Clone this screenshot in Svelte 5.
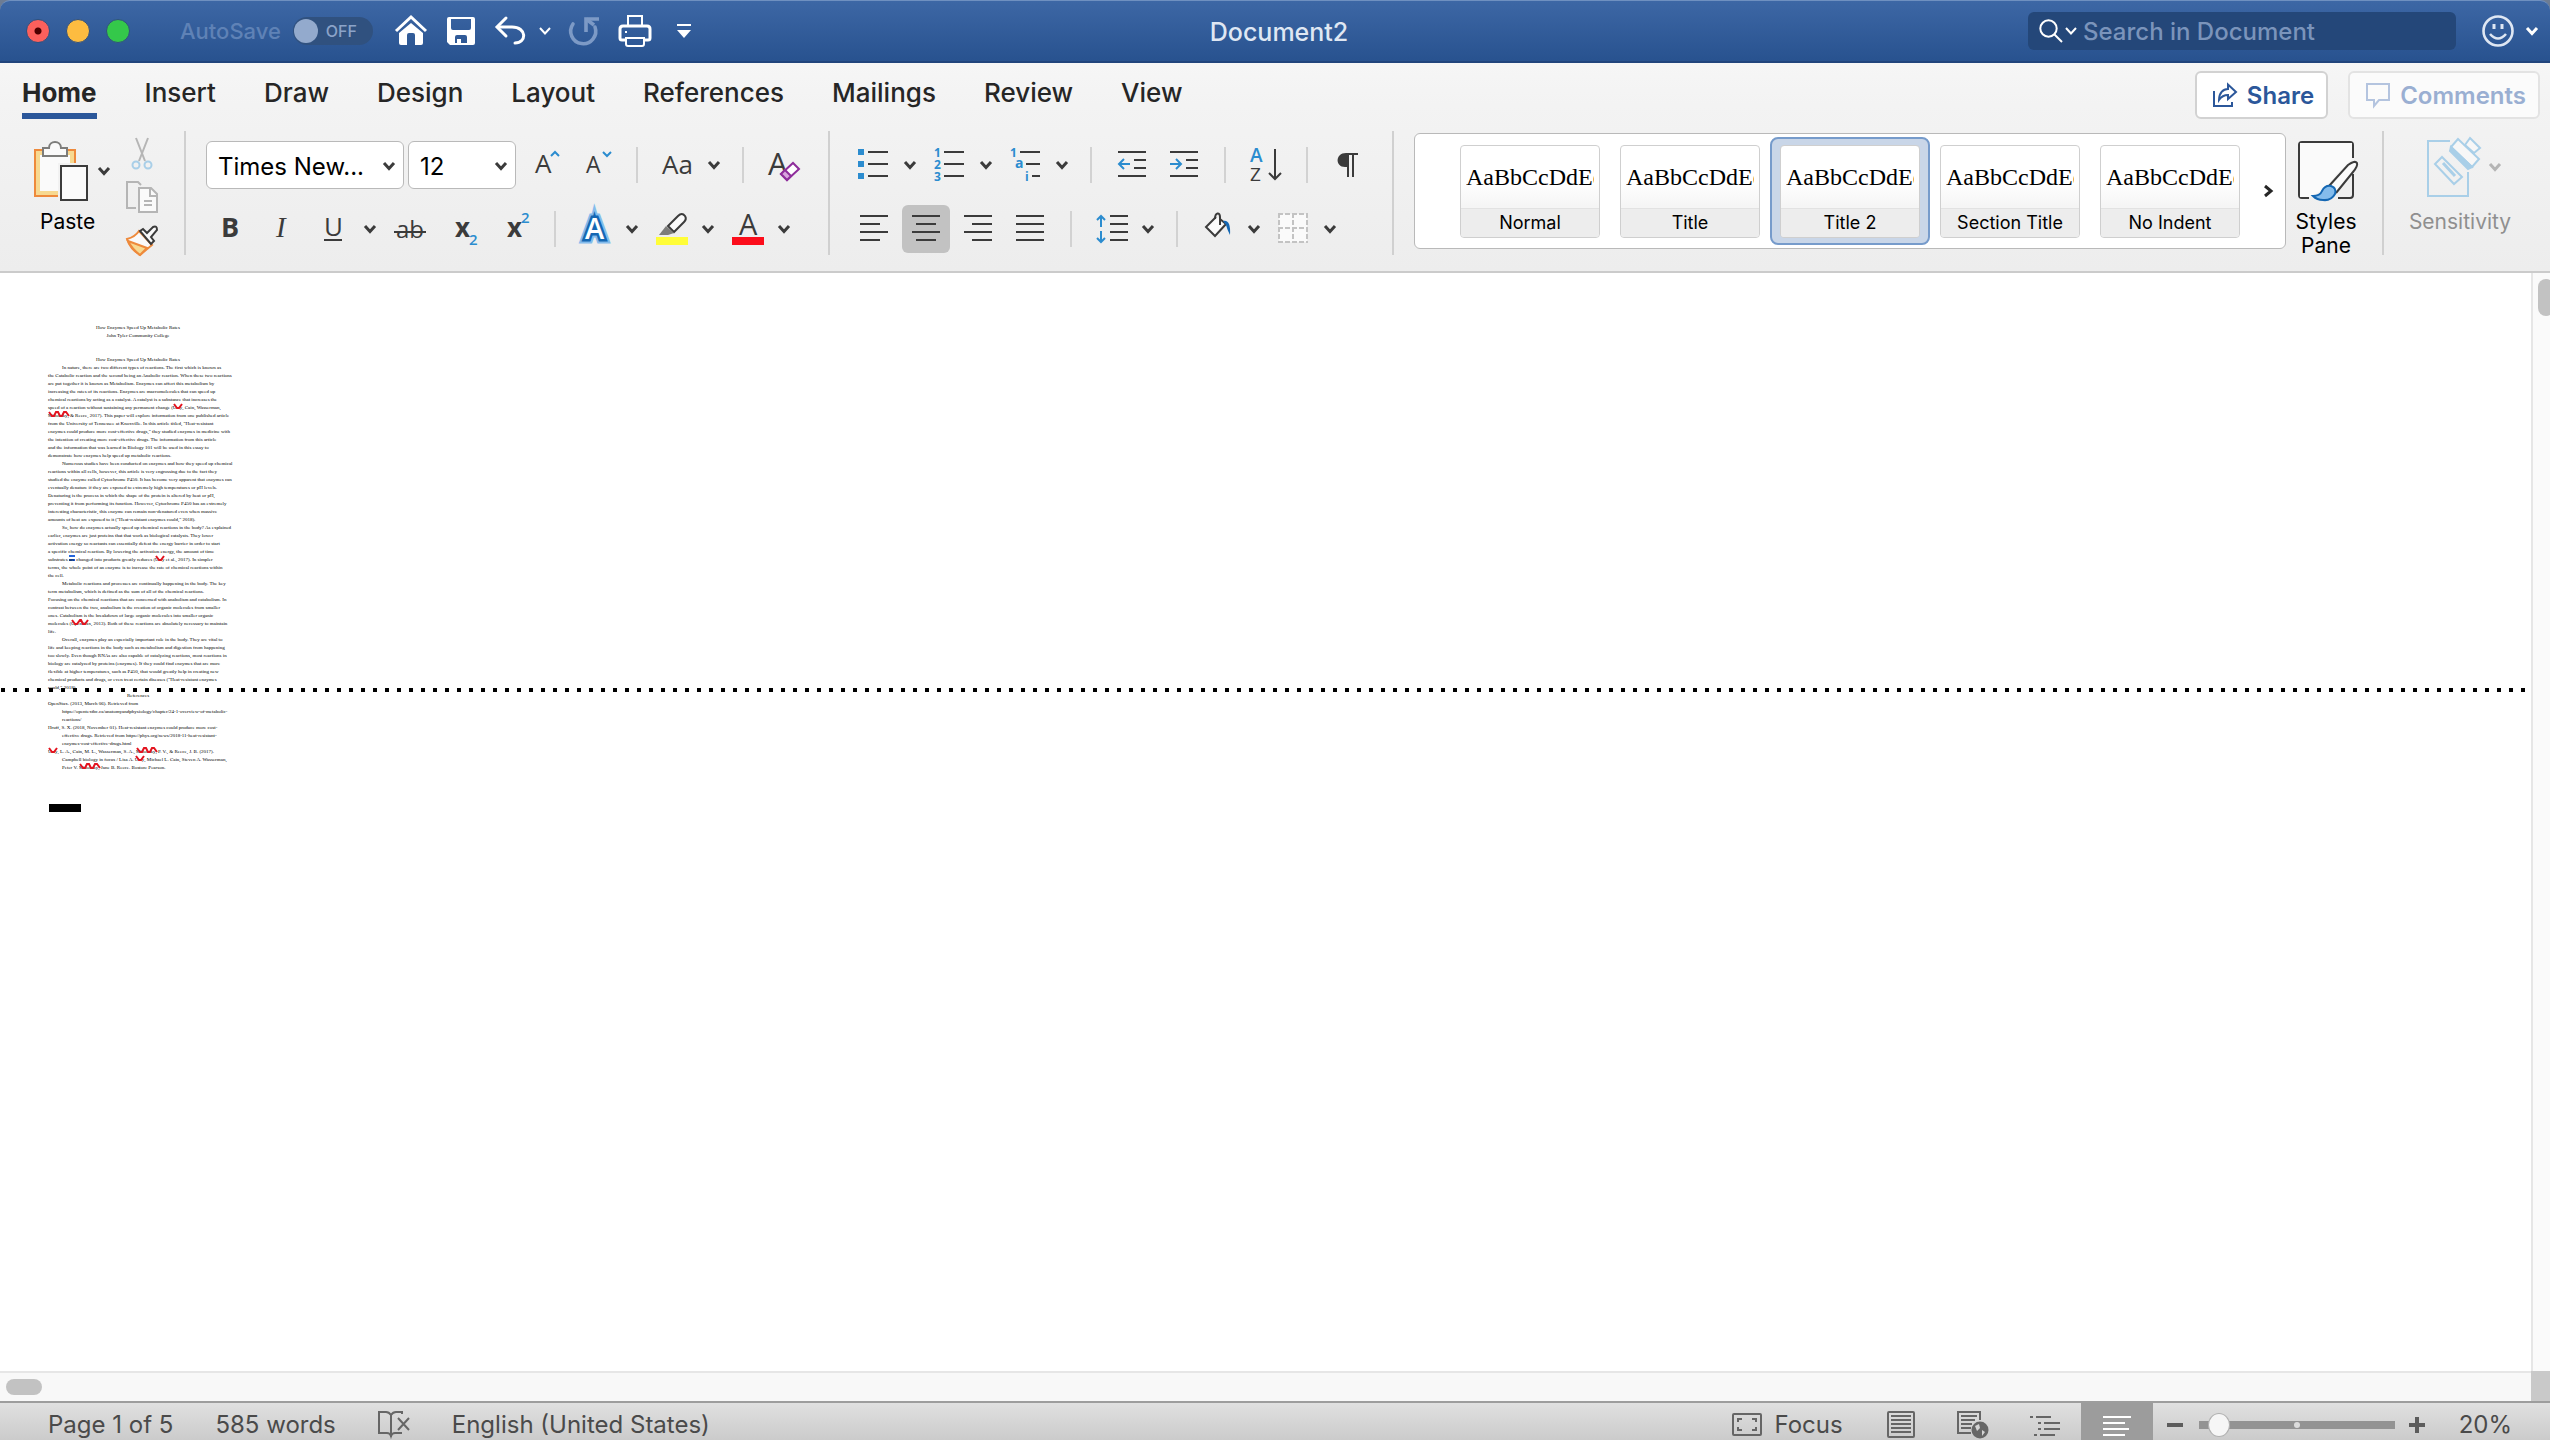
<script>
	let fontName = $state('Times New...');
	let fontSize = $state('12');
	let autoSave = $state(false);
	let zoom = $state(20);
	let activeTab = $state('Home');
	let activeStyle = $state('Title 2');

	const tabs = [
		'Home',
		'Insert',
		'Draw',
		'Design',
		'Layout',
		'References',
		'Mailings',
		'Review',
		'View'
	];

	const styles = ['Normal', 'Title', 'Title 2', 'Section Title', 'No Indent'];

	// c = centred, i = first line indent, blank = flush left
	// [word] is a spelling mark, {word} is a grammar mark
	const lines = [
		['c', 'How Enzymes Speed Up Metabolic Rates'],
		['c', 'John Tyler Community College'],
		['', ''],
		['', ''],
		['c', 'How Enzymes Speed Up Metabolic Rates'],
		['i', 'In nature, there are two different types of reactions. The first which is known as'],
		['', 'the Catabolic reaction and the second being an Anabolic reaction. When these two reactions'],
		['', 'are put together it is known as Metabolism. Enzymes can affect this metabolism by'],
		['', 'increasing the rates of its reactions. Enzymes are macromolecules that can speed up'],
		['', 'chemical reactions by acting as a catalyst. A catalyst is a substance that increases the'],
		['', 'speed of a reaction without sustaining any permanent change ([Urry], Cain, Wasserman,'],
		['', '[Minorsky], & Reece, 2017). This paper will explore information from one published article'],
		['', 'from the University of Tennessee at Knoxville. In this article titled, "Heat-resistant'],
		['', 'enzymes could produce more cost-effective drugs," they studied enzymes in medicine with'],
		['', 'the intention of creating more cost-effective drugs. The information from this article'],
		['', 'and the information that was learned in Biology 101 will be used in this essay to'],
		['', 'demonstrate how enzymes help speed up metabolic reactions.'],
		['i', 'Numerous studies have been conducted on enzymes and how they speed up chemical'],
		['', 'reactions within all cells, however, this article is very engrossing due to the fact they'],
		['', 'studied the enzyme called Cytochrome P450. It has become very apparent that enzymes can'],
		['', 'eventually denature if they are exposed to extremely high temperatures or pH levels.'],
		['', 'Denaturing is the process in which the shape of the protein is altered by heat or pH,'],
		['', 'preventing it from performing its function. However, Cytochrome P450 has an extremely'],
		['', 'interesting characteristic, this enzyme can remain non-denatured even when massive'],
		['', 'amounts of heat are exposed to it ("Heat-resistant enzymes could," 2018).'],
		['i', 'So, how do enzymes actually speed up chemical reactions in the body? As explained'],
		['', 'earlier, enzymes are just proteins that that work as biological catalysts. They lower'],
		['', 'activation energy so reactants can essentially defeat the energy barrier in order to start'],
		['', 'a specific chemical reaction. By lowering the activation energy, the amount of time'],
		['', 'substrates {are} changed into products greatly reduces ([Urry] et al., 2017). In simpler'],
		['', 'terms, the whole point of an enzyme is to increase the rate of chemical reactions within'],
		['', 'the cell.'],
		['i', 'Metabolic reactions and processes are continually happening in the body. The key'],
		['', 'term metabolism, which is defined as the sum of all of the chemical reactions.'],
		['', 'Focusing on the chemical reactions that are concerned with anabolism and catabolism. In'],
		['', 'contrast between the two, anabolism is the creation of organic molecules from smaller'],
		['', 'ones. Catabolism is the breakdown of large organic molecules into smaller organic'],
		['', 'molecules ([OpenStax], 2013). Both of these reactions are absolutely necessary to maintain'],
		['', 'life.'],
		['i', 'Overall, enzymes play an especially important role in the body. They are vital to'],
		['', 'life and keeping reactions in the body such as metabolism and digestion from happening'],
		['', 'too slowly. Even though RNAs are also capable of catalyzing reactions, most reactions in'],
		['', 'biology are catalyzed by proteins (enzymes). If they could find enzymes that are more'],
		['', 'flexible at higher temperatures, such as P450, that would greatly help in creating new'],
		['', 'chemical products and drugs, or even treat certain diseases ("Heat-resistant enzymes'],
		['break', 'could," 2018).'],
		['c', 'References'],
		['', 'OpenStax. (2013, March 06). Retrieved from'],
		['i', 'https://opentextbc.ca/anatomyandphysiology/chapter/24-1-overview-of-metabolic-'],
		['i', 'reactions/'],
		['', 'Hruff, S. X. (2018, November 01). Heat-resistant enzymes could produce more cost-'],
		['i', 'effective drugs. Retrieved from https://phys.org/news/2018-11-heat-resistant-'],
		['i', 'enzymes-cost-effective-drugs.html'],
		['', '[Urry], L. A., Cain, M. L., Wasserman, S. A., [Minorsky], P. V., & Reece, J. B. (2017).'],
		['i', 'Campbell biology in focus / Lisa A. [Urry], Michael L. Cain, Steven A. Wasserman,'],
		['i', 'Peter V. [Minorsky], Jane B. Reece. Boston: Pearson.']
	];

	const waves = {
		Urry: 'M1 1L4 5H6L9 1',
		OpenStax: 'M1 1L4 5H6L9 1H10L12 5H14L17 1',
		Minorsky: 'M1 1L4 5H6L8 1H10L12 5H14L16 1H18L21 5'
	};

	/**
	 * Split a line into plain text and marked words.
	 * @param {string} text
	 */
	function parts(text) {
		return text.split(/(\[\w+\]|\{\w+\})/).filter((part) => part !== '');
	}
</script>

{#snippet chevron()}
	<svg class="chevron" viewBox="0 0 12 10" aria-hidden="true">
		<path d="M1 2L6 7.5L11 2" />
	</svg>
{/snippet}

<div class="window">
	<header class="titlebar">
		<div class="title_left">
			<div class="lights">
				<button class="light close" aria-label="Close"></button>
				<button class="light minimise" aria-label="Minimise"></button>
				<button class="light zoom" aria-label="Zoom"></button>
			</div>
			<label class="autosave">
				AutoSave
				<span class="switch">
					<input type="checkbox" role="switch" bind:checked={autoSave} />
					<span>OFF</span>
				</span>
			</label>
			<div class="quick">
				<button aria-label="Home">
					<svg viewBox="0 0 32 32">
						<path d="M1 16L16 2L31 16" fill="none" stroke="#fff" stroke-width="3" />
						<path d="M16 8L28 18V28Q28 30 26 30H20V20Q20 18 18 18H14Q12 18 12 20V30H6Q4 30 4 28V18Z" fill="#fff" />
					</svg>
				</button>
				<button aria-label="Save">
					<svg viewBox="0 0 32 32">
						<path
							fill="#fff"
							fill-rule="evenodd"
							d="M4 2H28Q30 2 30 4V28Q30 30 28 30H5L2 27V4Q2 2 4 2ZM6 4V13Q6 15 8 15H24Q26 15 26 13V4ZM10 22V28H12V24H16V28H22V22Q22 20 20 20H12Q10 20 10 22Z"
						/>
					</svg>
				</button>
				<button class="undo" aria-label="Undo">
					<svg viewBox="0 0 32 32" fill="none" stroke="#fff" stroke-width="3" stroke-linecap="round">
						<path d="M11 3L2 12L11 21" />
						<path d="M3 12H17C32 12 32 28 20 28" />
					</svg>
					{@render chevron()}
				</button>
				<button aria-label="Repeat" disabled>
					<svg viewBox="0 0 32 32" fill="none" stroke="#7d9ac6" stroke-width="3.6">
						<path d="M4 9A12.5 12.5 0 1 0 26 12" stroke-linecap="round" />
						<path d="M17 17V4H30" />
						<path d="M17 4L25 10" />
					</svg>
				</button>
				<button aria-label="Print">
					<svg viewBox="0 0 32 32" fill="none" stroke="#fff" stroke-width="2">
						<path d="M9 11V1H23V11" />
						<path d="M7 25H3Q1 25 1 23V14Q1 11 4 11H28Q31 11 31 14V23Q31 25 29 25H25" stroke-width="3" />
						<path d="M7 23V29Q7 31 9 31H23Q25 31 25 29V23Z" />
						<path d="M6 17H8" />
					</svg>
				</button>
				<button aria-label="Customise toolbar">
					<svg class="more" viewBox="0 0 14 14">
						<path d="M0 0H14V2H0ZM0 6H14L7 14Z" fill="#fff" />
					</svg>
				</button>
			</div>
		</div>
		<h1>Document2</h1>
		<div class="title_right">
			<label class="search">
				<svg viewBox="0 0 24 24" fill="none" stroke="#fff" stroke-width="2">
					<circle cx="9.5" cy="9.5" r="8.2" />
					<path d="M15.5 15.5L23 23" />
				</svg>
				{@render chevron()}
				<input type="search" placeholder="Search in Document" aria-label="Search in Document" />
			</label>
			<button class="smiley" aria-label="Feedback">
				<svg viewBox="0 0 32 32" fill="none" stroke="#dfe7f3" stroke-width="2.6">
					<circle cx="16" cy="16" r="14.5" />
					<path d="M12 9V14M20 9V14" stroke-width="3" />
					<path d="M8 19Q16 28 24 19" />
				</svg>
				{@render chevron()}
			</button>
		</div>
	</header>

	<div class="ribbon">
		<div class="tabrow">
			<nav>
				{#each tabs as tab}
					<button class:active={tab === activeTab} onclick={() => (activeTab = tab)}>{tab}</button>
				{/each}
			</nav>
			<button class="pill">
				<svg viewBox="0 0 24 24" fill="none" stroke="#2b579a" stroke-width="2">
					<path d="M1 8V23H19V19" />
					<path d="M6 17C6 10 10 6 15 6V1.5L23 9L15 16V12C11 12 8 14 6 17Z" />
				</svg>
				Share
			</button>
			<button class="pill faded" disabled>
				<svg viewBox="0 0 24 24" fill="none" stroke="#b4c4df" stroke-width="2">
					<path d="M1 1H23V17H13L8 23V17H1Z" />
				</svg>
				Comments
			</button>
		</div>

		<div class="tools">
			<section class="clipboard">
				<button class="paste">
					<span class="big">
						<svg class="paste_icon" viewBox="0 0 54 60" fill="none">
							<path d="M1 9H41V55H1Z" fill="#f7d991" stroke="#ee8a3c" stroke-width="2" />
							<path d="M6 14H36V50H6Z" fill="#fafafa" />
							<path d="M24 22H54V60H24Z" fill="#f2f2f2" />
							<path
								d="M9 15V7H15C15 -1 27 -1 27 7H33V15Z"
								fill="#fafafa"
								stroke="#7d7d7b"
								stroke-width="2"
							/>
							<path d="M27 25H53V59H27Z" fill="#fafafa" stroke="#3b3b3b" stroke-width="2" />
						</svg>
						{@render chevron()}
					</span>
					Paste
				</button>
				<div class="clip_side">
					<button aria-label="Cut">
						<svg viewBox="0 0 32 32" fill="none">
							<path d="M10 1L19 24M22 1L13 24" stroke="#b5b5b5" stroke-width="2" />
							<circle cx="10" cy="28" r="3.5" stroke="#a9cfe8" stroke-width="2" />
							<circle cx="22" cy="28" r="3.5" stroke="#a9cfe8" stroke-width="2" />
						</svg>
					</button>
					<button aria-label="Copy">
						<svg viewBox="0 0 32 32" fill="none" stroke="#b5b5b5" stroke-width="2">
							<path d="M15 4L12 1H1V27H10" />
							<path d="M13 7H25L31 13V31H13Z" fill="#fafafa" />
							<path d="M24 7V15H31M18 20H26M18 24H26" />
						</svg>
					</button>
					<button aria-label="Format painter">
						<svg viewBox="0 0 32 32" fill="none">
							<path d="M13 6L26 20L14 30Q4 24 1 14Q9 12 13 6Z" fill="#fafafa" stroke="#ee8a3c" stroke-width="2" />
							<path d="M2 16L21 23L14 30Q6 24 2 16Z" fill="#f7d991" stroke="#ee8a3c" stroke-width="2" />
							<path
								d="M14 6L17 4L21 8L27 2Q31 0 31 5L25 12L28 16L25 19Z"
								fill="#fafafa"
								stroke="#3b3b3b"
								stroke-width="2"
							/>
						</svg>
					</button>
				</div>
			</section>

			<section class="font">
				<div class="row">
					<label class="picker family">
						<select bind:value={fontName} aria-label="Font">
							<option>Times New...</option>
						</select>
						{@render chevron()}
					</label>
					<label class="picker size">
						<select bind:value={fontSize} aria-label="Font size">
							<option>12</option>
						</select>
						{@render chevron()}
					</label>
					<button class="icon" aria-label="Increase font size">
						<svg viewBox="0 0 32 32">
							<text x="7" y="24" font-size="26">A</text>
							<path class="blue" d="M23 7L27 3L31 7" />
						</svg>
					</button>
					<button class="icon" aria-label="Decrease font size">
						<svg viewBox="0 0 32 32">
							<text x="6" y="24" font-size="23">A</text>
							<path class="blue" d="M23 3L27 7L31 3" />
						</svg>
					</button>
					<i class="sep"></i>
					<button class="split" aria-label="Change case">
						<svg viewBox="0 0 32 32"><text x="0" y="25" font-size="26">Aa</text></svg>
						{@render chevron()}
					</button>
					<i class="sep"></i>
					<button class="icon" aria-label="Clear formatting">
						<svg viewBox="0 0 32 32">
							<text x="0" y="26" font-size="31">A</text>
							<path d="M12 25L24 12L32 20L20 32Z" fill="#f1f1f1" />
							<path d="M13 25L25 14L31 20L19 31Z" fill="#fff" stroke="#8e2d9b" stroke-width="2" />
							<path d="M13 25L17 21L23 27L19 31Z" fill="#d9a5df" stroke="#8e2d9b" stroke-width="2" />
						</svg>
					</button>
				</div>
				<div class="row second">
					<button class="icon" aria-label="Bold">
						<svg viewBox="0 0 32 32"><text x="7" y="24" font-size="27" font-weight="700">B</text></svg>
					</button>
					<button class="icon" aria-label="Italic">
						<svg viewBox="0 0 32 32"><text class="serif" x="10" y="24" font-size="29" font-style="italic">I</text></svg>
					</button>
					<button class="split" aria-label="Underline">
						<svg viewBox="0 0 32 32">
							<text x="6" y="23" font-size="26">U</text>
							<path class="dark" d="M6 27H24" />
						</svg>
						{@render chevron()}
					</button>
					<button class="icon" aria-label="Strikethrough">
						<svg viewBox="0 0 32 32">
							<text x="2" y="25" font-size="24">ab</text>
							<path class="dark" d="M0 19H32" />
						</svg>
					</button>
					<button class="icon" aria-label="Subscript">
						<svg viewBox="0 0 32 32">
							<text x="9" y="24" font-size="26" font-weight="700">x</text>
							<text class="hint" x="23" y="32" font-size="15" font-weight="600">2</text>
						</svg>
					</button>
					<button class="icon" aria-label="Superscript">
						<svg viewBox="0 0 32 32">
							<text x="9" y="24" font-size="26" font-weight="700">x</text>
							<text class="hint" x="23" y="10" font-size="15" font-weight="600">2</text>
						</svg>
					</button>
					<i class="sep"></i>
					<button class="split" aria-label="Text effects">
						<svg class="effect" viewBox="0 0 32 32">
							<text class="glow" x="5" y="26" font-size="29">A</text>
							<text class="edge" x="5" y="26" font-size="29" aria-hidden="true">A</text>
							<text class="core" x="5" y="26" font-size="29" aria-hidden="true">A</text>
						</svg>
						{@render chevron()}
					</button>
					<button class="split" aria-label="Highlight">
						<svg viewBox="0 0 32 32" fill="none">
							<path d="M12 13L22 3Q26 -1 29 3Q31 6 28 9L18 19Z" fill="#fafafa" stroke="#3b3b3b" stroke-width="2" />
							<path d="M10 13L18 20L12 22H3Z" fill="#7d7d7b" />
							<path d="M0 24H32V32H0Z" fill="#fffd38" />
						</svg>
						{@render chevron()}
					</button>
					<button class="split" aria-label="Font colour">
						<svg viewBox="0 0 32 32">
							<text x="7" y="22" font-size="29">A</text>
							<path d="M0 24H32V32H0Z" fill="#fc0d1b" />
						</svg>
						{@render chevron()}
					</button>
				</div>
			</section>

			<section class="paragraph">
				<div class="row">
					<button class="split" aria-label="Bullets">
						<svg viewBox="0 0 32 32">
							<path d="M0 0H6V6H0ZM0 12H6V18H0ZM0 24H6V30H0Z" fill="#2b8ccf" />
							<path class="dark" d="M10 3H30M10 15H30M10 27H30" />
						</svg>
						{@render chevron()}
					</button>
					<button class="split" aria-label="Numbering">
						<svg viewBox="0 0 32 32">
							<g class="hint" font-size="12" font-weight="700">
								<text x="0" y="8">1</text>
								<text x="0" y="20">2</text>
								<text x="0" y="32">3</text>
							</g>
							<path class="dark" d="M10 3H30M10 15H30M10 27H30" />
						</svg>
						{@render chevron()}
					</button>
					<button class="split" aria-label="Multilevel list">
						<svg viewBox="0 0 32 32">
							<g class="hint" font-size="12" font-weight="700">
								<text x="0" y="8">1</text>
								<text x="5" y="19" font-size="14">a</text>
								<text x="15" y="32">i</text>
							</g>
							<path class="dark" d="M10 3H30M16 15H30M22 27H30" />
						</svg>
						{@render chevron()}
					</button>
					<i class="sep"></i>
					<button class="icon" aria-label="Decrease indent">
						<svg viewBox="0 0 32 32">
							<path class="dark" d="M2 3H30M18 11H30M18 19H30M2 27H30" />
							<path class="blue" d="M14 15H3M8 10L3 15L8 20" />
						</svg>
					</button>
					<button class="icon" aria-label="Increase indent">
						<svg viewBox="0 0 32 32">
							<path class="dark" d="M2 3H30M18 11H30M18 19H30M2 27H30" />
							<path class="blue" d="M2 15H13M8 10L13 15L8 20" />
						</svg>
					</button>
					<i class="sep"></i>
					<button class="icon" aria-label="Sort">
						<svg viewBox="0 0 32 32">
							<text class="hint" x="0" y="13" font-size="19" font-weight="600">A</text>
							<text x="0" y="32" font-size="19">Z</text>
							<path class="dark" d="M25 0V30M19 24L25 30L31 24" />
						</svg>
					</button>
					<i class="sep"></i>
					<button class="icon" aria-label="Show formatting marks">
						<svg viewBox="0 0 32 32">
							<path d="M14 4H26V6H22V28H20V6H17V28H15V18H13C3 18 3 4 14 4Z" fill="#3b3b3b" />
						</svg>
					</button>
				</div>
				<div class="row">
					<button class="icon" aria-label="Align left">
						<svg viewBox="0 0 32 32"><path class="dark" d="M2 3H30M2 11H22M2 19H30M2 27H22" /></svg>
					</button>
					<button class="icon pressed" aria-label="Centre">
						<svg viewBox="0 0 32 32"><path class="dark" d="M2 3H30M6 11H26M2 19H30M6 27H26" /></svg>
					</button>
					<button class="icon" aria-label="Align right">
						<svg viewBox="0 0 32 32"><path class="dark" d="M2 3H30M10 11H30M2 19H30M10 27H30" /></svg>
					</button>
					<button class="icon" aria-label="Justify">
						<svg viewBox="0 0 32 32"><path class="dark" d="M2 3H30M2 11H30M2 19H30M2 27H30" /></svg>
					</button>
					<i class="sep"></i>
					<button class="split" aria-label="Line spacing">
						<svg viewBox="0 0 32 32">
							<path class="dark" d="M14 3H32M14 11H32M14 19H32M14 27H32" />
							<path class="blue" d="M5 3V14M1 7L5 3L9 7M5 18V29M1 25L5 29L9 25" />
						</svg>
						{@render chevron()}
					</button>
					<i class="sep"></i>
					<button class="split" aria-label="Shading">
						<svg viewBox="0 0 32 32" fill="none">
							<path d="M14 4L4 14L13 23L24 11L18 6" fill="#fafafa" stroke="#3b3b3b" stroke-width="2" />
							<path d="M13 6C13 -1 18 -1 18 4V12" stroke="#3b3b3b" stroke-width="2" />
							<path d="M21 8Q29 6 28 22Q25 16 24 12Z" fill="#1467b3" />
						</svg>
						{@render chevron()}
					</button>
					<button class="split" aria-label="Borders">
						<svg viewBox="0 0 32 32" fill="none" stroke="#c3c3c3" stroke-width="2">
							<rect x="1" y="1" width="28" height="28" fill="#fafafa" stroke="none" />
							<path stroke-dasharray="5 2" d="M0 1H30M0 29H30M1 0V30M29 0V30M0 15H30M15 0V30" />
						</svg>
						{@render chevron()}
					</button>
				</div>
			</section>

			<section class="styles">
				<div class="gallery">
					{#each styles as style}
						<button
							class="card"
							class:chosen={style === activeStyle}
							onclick={() => (activeStyle = style)}
						>
							<span class="inner">
								<span class="sample"><span>AaBbCcDdEe</span></span>
								<span class="name">{style}</span>
							</span>
						</button>
					{/each}
					<button class="more_styles" aria-label="More styles">
						<svg viewBox="0 0 10 14"><path d="M2 2L8 7L2 12" /></svg>
					</button>
				</div>
				<button class="pane">
					<svg viewBox="0 0 60 60" fill="none">
						<path
							d="M11 57H4Q1 57 1 54V4Q1 1 4 1H52Q55 1 55 4V17M55 33V54Q55 57 52 57H40"
							stroke="#3b3b3b"
							stroke-width="2"
						/>
						<path d="M2 2H54V18L38 34L28 47L12 56H2Z" fill="#fafafa" />
						<path
							d="M31 45L50 24Q57 19 59 22Q60 25 55 31L38 52"
							fill="#fafafa"
							stroke="#3b3b3b"
							stroke-width="2"
						/>
						<path
							d="M15 55Q22 55 24 50Q27 44 33 45Q39 47 37 53Q33 60 25 59Q19 59 15 55Z"
							fill="#84bcec"
							stroke="#1467b3"
							stroke-width="2"
						/>
					</svg>
					Styles<br />Pane
				</button>
			</section>

			<section class="sensitivity">
				<button disabled>
					<span class="big">
						<svg class="sens_icon" viewBox="0 0 54 60" fill="none" stroke="#a9cfe8" stroke-width="2">
							<path d="M23 4H1V59H41V35" />
							<path d="M15 20L35 40L27 47L8 27Z" />
							<path d="M16 26L28 39" stroke-width="3" />
							<path d="M31 2L52 22L45 30L24 10Z" fill="#f7f7f7" />
							<path d="M24 10L45 30L41 32L23 14Z" fill="#a9cfe8" />
							<path d="M43 1L53 11L47 16L38 8Z" fill="#f7f7f7" />
						</svg>
						{@render chevron()}
					</span>
					Sensitivity
				</button>
			</section>
		</div>
	</div>

	<div class="workspace">
		<main>
			<article>
				{#each lines as [kind, text]}
					<p class:centre={kind === 'c'} class:indent={kind === 'i'}>
						{#each parts(text) as part}
							{#if part[0] === '['}
								<span class="mark">{part.slice(1, -1)}<svg viewBox="0 0 22 8"><path d={waves[part.slice(1, -1)]} /></svg></span>
							{:else if part[0] === '{'}
								<span class="grammar">{part.slice(1, -1)}</span>
							{:else}{part}{/if}
						{/each}
					</p>
					{#if kind === 'break'}
						<div class="page_break"></div>
					{/if}
				{/each}
				<div class="end_mark"></div>
			</article>
		</main>
		<div class="vscroll"><span></span></div>
		<div class="hscroll"><span></span></div>
		<div class="corner"></div>
	</div>

	<footer>
		<button>Page 1 of 5</button>
		<button>585 words</button>
		<button aria-label="Proofing">
			<svg viewBox="0 0 32 28" fill="none" stroke="#666" stroke-width="2">
				<path d="M13 4V26M13 4Q11 1 8 1H1V22H9Q12 22 13 25Q14 22 17 22H24M13 4Q15 1 18 1H24V3" />
				<path d="M20 7L31 19M31 7L20 19" />
			</svg>
		</button>
		<button class="language">English (United States)</button>
		<div class="views">
			<button class="focus">
				<svg viewBox="0 0 30 24" fill="none" stroke="#666" stroke-width="2">
					<rect x="1" y="1" width="28" height="21" rx="1" />
					<path d="M6 9V6H10M20 6H24V9M6 14V17H10M20 17H24V14" />
				</svg>
				Focus
			</button>
			<button class="view" aria-label="Print layout">
				<svg viewBox="0 0 32 28" fill="none" stroke="#666" stroke-width="2">
					<rect x="3" y="1" width="26" height="25" rx="1" />
					<path d="M6 5H26M6 9H26M6 13H26M6 17H26M6 21H26" />
				</svg>
			</button>
			<button class="view" aria-label="Web layout">
				<svg viewBox="0 0 32 28" fill="none" stroke="#666" stroke-width="2">
					<path d="M14 22H1V1H23V9M4 5H20M4 9H18M4 13H15M4 17H14" />
					<circle cx="23" cy="19" r="8.5" fill="#666" stroke="none" />
					<path d="M18 15L22 13L23 17L20 20ZM25 19L28 21L25 25Z" fill="#d5d5d5" stroke="none" />
				</svg>
			</button>
			<button class="view" aria-label="Outline">
				<svg viewBox="0 0 32 28" fill="none" stroke="#666" stroke-width="2">
					<path d="M1 6H4M7 6H22M9 12H12M15 12H31M9 18H12M15 18H31M5 24H8M11 24H26" />
				</svg>
			</button>
			<button class="view on" aria-label="Draft">
				<svg viewBox="0 0 32 28" fill="none" stroke="#fff" stroke-width="2">
					<path d="M2 6H30M2 12H24M2 18H28M2 24H24" />
				</svg>
			</button>
		</div>
		<button class="step" aria-label="Zoom out">
			<svg viewBox="0 0 16 16"><path d="M0 8H16" /></svg>
		</button>
		<span class="slider">
			<input type="range" min="10" max="190" bind:value={zoom} aria-label="Zoom" />
		</span>
		<button class="step" aria-label="Zoom in">
			<svg viewBox="0 0 16 16"><path d="M0 8H16M8 0V16" /></svg>
		</button>
		<button class="percent">{zoom}%</button>
	</footer>
</div>

<style>
	:global(body) {
		background: #6d7c93;
	}

	.window {
		display: flex;
		flex-direction: column;
		height: 100vh;
		overflow: hidden;
		font-family: Inter, Roboto, 'Liberation Sans', sans-serif;
		color: #262626;
	}

	button {
		padding: 0;
		border: none;
		background: none;
		font: inherit;
		color: inherit;
	}
	svg {
		display: block;
		flex: none;
		width: 32px;
		height: 32px;
		overflow: visible;
	}
	.chevron {
		width: 12px;
		height: 10px;
		fill: none;
		stroke: #3b3b3b;
		stroke-width: 3;
	}

	/* Title bar */
	.titlebar {
		display: grid;
		grid-template-columns: 1fr auto 1fr;
		align-items: center;
		height: 60px;
		border-top: 1px solid #6f90c0;
		border-bottom: 2px solid #21457c;
		border-radius: 10px 10px 0 0;
		background: linear-gradient(#3d67a5, #28528f);
	}
	h1 {
		margin: 0;
		padding: 2px 0 0 8px;
		font-size: 25px;
		font-weight: 500;
		color: #dfe7f3;
	}
	.title_left,
	.title_right,
	.lights,
	.quick,
	.autosave {
		display: flex;
		align-items: center;
	}
	.title_left {
		padding-left: 26px;
	}
	.lights {
		gap: 16px;
	}
	.light {
		box-sizing: border-box;
		width: 24px;
		height: 24px;
		border: 1px solid #30507d;
		border-radius: 50%;
	}
	.close {
		background: radial-gradient(circle, #4d0000 3px, #fc605c 4px);
	}
	.minimise {
		background: #fdbc40;
	}
	.zoom {
		background: #34c84a;
	}
	.autosave {
		gap: 12px;
		margin-left: 50px;
		font-size: 22px;
		font-weight: 500;
		color: #5f82b6;
	}
	.switch {
		position: relative;
		display: flex;
		align-items: center;
		justify-content: flex-end;
		box-sizing: border-box;
		width: 80px;
		height: 28px;
		padding-right: 16px;
		border-radius: 14px;
		background: #30517f;
		font-size: 16px;
		color: #8ba3c8;
	}
	.switch input {
		position: absolute;
		inset: 2px auto auto 1px;
		width: 24px;
		height: 24px;
		margin: 0;
		border-radius: 50%;
		background: #93aacd;
		appearance: none;
	}
	.quick {
		gap: 18px;
		margin-left: 22px;
	}
	.quick .undo {
		display: flex;
		align-items: center;
		gap: 12px;
	}
	.titlebar .chevron {
		stroke: #fff;
		stroke-width: 2;
	}
	.quick .more {
		width: 14px;
		height: 14px;
		margin-left: 8px;
	}
	.title_right {
		justify-content: flex-end;
		gap: 26px;
		padding-right: 12px;
	}
	.search {
		display: flex;
		align-items: center;
		gap: 2px;
		box-sizing: border-box;
		width: 428px;
		height: 38px;
		padding-left: 11px;
		border-radius: 6px;
		background: #244779;
	}
	.search svg:first-child {
		width: 24px;
		height: 24px;
	}
	.search input {
		flex: 1;
		min-width: 0;
		padding: 0 0 0 4px;
		border: none;
		outline: none;
		background: none;
		font: 500 24px Inter, sans-serif;
		color: #fff;
	}
	.search input::placeholder {
		color: #7b94bb;
		opacity: 1;
	}
	.smiley {
		display: flex;
		align-items: center;
		gap: 12px;
	}
	.smiley .chevron {
		stroke-width: 3;
	}

	/* Ribbon */
	.ribbon {
		border-bottom: 2px solid #cbcbcb;
		background: linear-gradient(#f6f6f6, #f3f3f3 20%, #ededed);
	}
	.tabrow {
		display: flex;
		align-items: center;
		height: 64px;
		padding-right: 10px;
	}
	nav {
		display: flex;
		flex: 1;
		gap: 48px;
		padding-left: 22px;
	}
	nav button {
		box-sizing: border-box;
		height: 48px;
		padding-top: 2px;
		font-size: 26px;
		font-weight: 500;
		line-height: 40px;
		border-bottom: 6px solid transparent;
	}
	nav .active {
		font-weight: 700;
		border-bottom-color: #2b579a;
	}
	.pill {
		display: flex;
		align-items: center;
		gap: 10px;
		box-sizing: border-box;
		height: 48px;
		padding: 0 12px 0 16px;
		border: 2px solid #d2d2d2;
		border-radius: 6px;
		background: #fff;
		font-size: 24px;
		font-weight: 600;
		color: #2b579a;
	}
	.pill svg {
		width: 24px;
		height: 24px;
	}
	.pill.faded {
		margin-left: 20px;
		border-color: #e3e3e3;
		background: #fbfbfb;
		color: #9aafd2;
	}
	.tools {
		display: flex;
		height: 124px;
		padding: 4px 0 16px;
	}
	section {
		display: flex;
		box-sizing: border-box;
		padding-top: 10px;
		border-right: 2px solid #d0d0d0;
	}
	.font,
	.paragraph {
		flex-direction: column;
		gap: 16px;
	}
	.font {
		padding-left: 20px;
		padding-right: 28px;
	}
	.paragraph {
		padding-left: 28px;
		padding-right: 28px;
	}
	.row {
		display: flex;
		align-items: center;
		gap: 20px;
		height: 48px;
	}
	.second {
		padding-left: 8px;
	}
	.sep {
		width: 2px;
		height: 36px;
		margin: 0 4px;
		background: #d2d2d2;
	}
	.split {
		display: flex;
		align-items: center;
		gap: 14px;
		margin-right: -2px;
	}
	.pressed {
		margin: -8px;
		padding: 8px;
		border-radius: 6px;
		background: #c2c2c2;
	}
	.row text {
		font-family: 'Open Sans', 'Noto Sans', sans-serif;
		fill: #3b3b3b;
	}
	.row text.serif {
		font-family: 'Liberation Serif', serif;
	}
	.row .hint,
	.row .hint text {
		fill: #2b8ccf;
	}
	.dark,
	.blue {
		fill: none;
		stroke: #3b3b3b;
		stroke-width: 2;
	}
	.blue {
		stroke: #2b8ccf;
	}
	.row .effect text {
		font-weight: 600;
		stroke-linejoin: miter;
	}
	.row .effect .glow {
		fill: none;
		stroke: #84bcec;
		stroke-width: 9;
	}
	.row .effect .edge {
		fill: none;
		stroke: #1467b3;
		stroke-width: 5;
	}
	.row .effect .core {
		fill: #fff;
	}

	.clipboard {
		box-sizing: border-box;
		width: 186px;
		padding-left: 34px;
	}
	.paste,
	.pane,
	.sensitivity button {
		display: flex;
		flex-direction: column;
		align-self: flex-start;
		font-size: 21px;
		font-weight: 400;
		line-height: 24px;
		color: #000;
	}
	.paste {
		width: 76px;
		margin-right: 16px;
		text-indent: 6px;
		text-align: left;
	}
	.big {
		display: flex;
		align-items: center;
		gap: 10px;
		margin-bottom: 9px;
	}
	.big .paste_icon,
	.big .sens_icon {
		width: 54px;
		height: 60px;
	}
	.clip_side {
		display: flex;
		flex-direction: column;
		gap: 12px;
		margin-top: -4px;
	}

	.picker {
		position: relative;
		flex: none;
		height: 48px;
	}
	.picker select {
		width: 100%;
		height: 100%;
		padding: 2px 11px 0;
		border: 1px solid #b9b9b9;
		border-radius: 6px;
		background: #fff;
		font: 400 24px Inter, sans-serif;
		color: #000;
		appearance: none;
	}
	.picker .chevron {
		position: absolute;
		top: 20px;
		right: 9px;
	}
	.family {
		width: 198px;
		margin-right: -16px;
	}
	.size {
		width: 108px;
		margin-right: -8px;
	}

	.styles {
		flex: 1;
		min-width: 0;
		padding-top: 2px;
		padding-left: 20px;
	}
	.gallery {
		display: flex;
		flex: 1;
		align-items: center;
		box-sizing: border-box;
		min-width: 0;
		height: 116px;
		padding-left: 35px;
		border: 1px solid #b9b9b9;
		border-radius: 6px;
		background: #fff;
		overflow: hidden;
	}
	.card {
		flex: none;
		box-sizing: border-box;
		width: 160px;
		height: 108px;
		padding: 6px 8px;
		border: 2px solid transparent;
		border-radius: 8px;
	}
	.chosen {
		border-color: #769bcb;
		background: #c9d6e8;
	}
	.inner {
		display: flex;
		flex-direction: column;
		box-sizing: border-box;
		height: 93px;
		border: 1px solid #cfcfcf;
		border-radius: 4px;
		background: linear-gradient(#fff 40%, #f5f5f5 66%);
		overflow: hidden;
	}
	.sample {
		flex: 1;
		padding: 0 5px;
		font: 24px/62px 'Liberation Serif', serif;
		color: #000;
	}
	.sample span {
		display: block;
		overflow: hidden;
		text-align: left;
	}
	.name {
		height: 30px;
		border-top: 1px solid #e2e2e2;
		background: #ededed;
		font-size: 18px;
		font-weight: 400;
		line-height: 28px;
		color: #000;
	}
	.more_styles {
		margin-left: auto;
		padding-right: 12px;
	}
	.more_styles svg {
		width: 10px;
		height: 14px;
		fill: none;
		stroke: #262626;
		stroke-width: 3;
	}
	.pane {
		align-items: center;
		width: 80px;
		margin: 8px 16px 0 0;
	}
	.pane svg {
		width: 60px;
		height: 60px;
		margin: 0 0 9px 4px;
	}
	.sensitivity {
		padding-left: 20px;
		padding-right: 34px;
		border: none;
	}
	.sensitivity button {
		align-items: center;
		width: 112px;
		margin-top: -4px;
		color: #8f8f8f;
	}
	.sensitivity .big {
		gap: 8px;
		margin: 0 0 13px 8px;
	}
	.sensitivity .chevron {
		stroke: #b5b5b5;
	}

	/* Document */
	.workspace {
		display: grid;
		flex: 1;
		grid-template-columns: 1fr 19px;
		grid-template-rows: 1fr 30px;
		min-height: 0;
		background: #fff;
	}
	main {
		overflow: hidden;
	}
	article {
		padding: 51px 0 0 48px;
		font: 5px/8px 'Liberation Serif', serif;
		color: #000;
	}
	p {
		width: 180px;
		height: 8px;
		margin: 0;
		white-space: nowrap;
	}
	.centre {
		text-align: center;
	}
	.indent {
		text-indent: 14px;
	}
	.mark {
		position: relative;
	}
	.mark svg {
		position: absolute;
		top: -2px;
		left: 0;
		width: 22px;
		height: 8px;
		fill: none;
		stroke: #e3141f;
		stroke-width: 2;
	}
	/* double rule through the word */
	.grammar {
		border-top: 2px solid #2766dc;
		background: linear-gradient(transparent 2px, #2766dc 2px 4px, transparent 4px) padding-box;
	}
	/* dotted rule across the whole view, drawn over the last line of the page */
	.page_break {
		position: relative;
		height: 4px;
		margin: -4px 0 0 -47px;
		background: repeating-linear-gradient(90deg, #000 0 4px, transparent 4px 12px);
	}
	.end_mark {
		width: 32px;
		height: 8px;
		margin: 32px 0 0 1px;
		background: #000;
	}
	.vscroll {
		border-left: 2px solid #e6e6e6;
		background: #fafafa;
		overflow: hidden;
	}
	.vscroll span {
		display: block;
		width: 16px;
		height: 37px;
		margin: 6px 0 0 5px;
		border-radius: 8px;
		background: #c2c2c2;
	}
	.hscroll {
		border-top: 2px solid #e6e6e6;
		background: #f8f8f8;
	}
	.hscroll span {
		display: block;
		width: 36px;
		height: 16px;
		margin: 6px;
		border-radius: 8px;
		background: #c2c2c2;
	}
	.corner {
		background: #c9c9c9;
	}

	/* Status bar */
	footer {
		display: flex;
		align-items: center;
		box-sizing: border-box;
		height: 39px;
		padding: 6px 38px 0 48px;
		border-top: 2px solid #9d9d9d;
		background: linear-gradient(#e0e0e0, #cbcbcb);
		font-size: 24px;
		line-height: 32px;
		color: #4a4a4a;
		gap: 42px;
	}
	footer svg {
		height: 28px;
	}
	.views {
		display: flex;
		align-items: center;
		margin-left: auto;
	}
	.focus {
		display: flex;
		align-items: center;
		gap: 12px;
		margin-right: 22px;
	}
	.focus svg {
		width: 30px;
		height: 24px;
	}
	.view {
		display: flex;
		align-items: center;
		justify-content: center;
		width: 72px;
		height: 37px;
		margin-top: -6px;
		padding-top: 6px;
		box-sizing: border-box;
	}
	.view.on {
		background: #9c9c9c;
	}
	.step,
	.slider {
		margin-left: -28px;
	}
	.slider {
		position: relative;
		margin-left: -26px;
	}
	.step svg {
		width: 16px;
		height: 16px;
		stroke: #5c5c5c;
		stroke-width: 4;
	}
	.slider::after {
		position: absolute;
		top: 13px;
		left: 95px;
		width: 6px;
		height: 6px;
		border-radius: 50%;
		background: #dcdcdc;
		content: '';
	}
	.slider input {
		display: block;
		width: 196px;
		height: 32px;
		margin: 0;
		background: linear-gradient(#939393, #939393) center / 100% 8px no-repeat;
		appearance: none;
	}
	.slider input::-webkit-slider-thumb {
		width: 22px;
		height: 24px;
		border: 1px solid #b0b0b0;
		border-radius: 50%;
		background: #f6f6f6;
		appearance: none;
	}
	.percent {
		margin-left: -8px;
	}
</style>
